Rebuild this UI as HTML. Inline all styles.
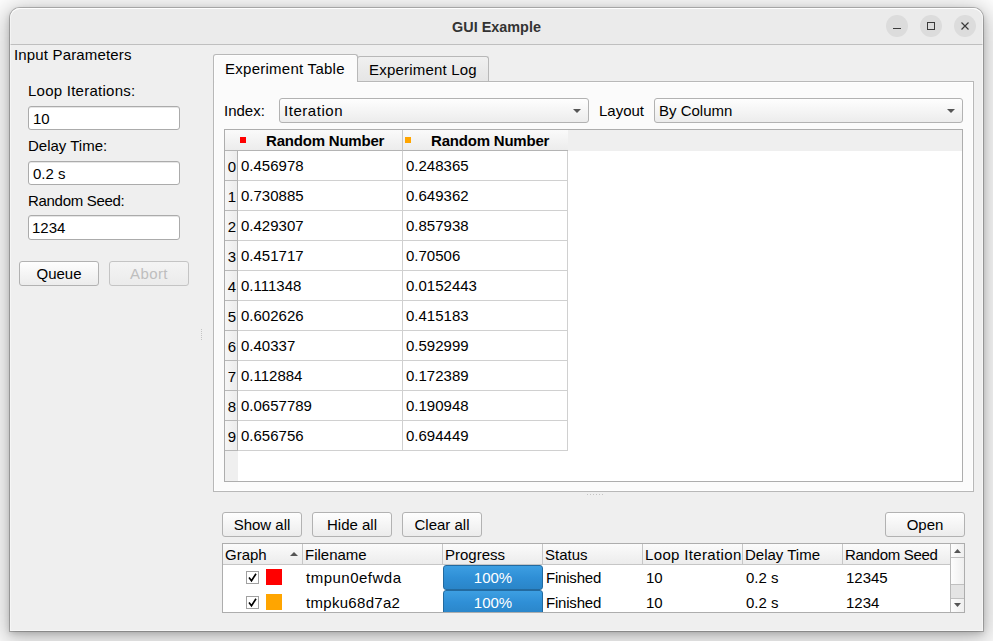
<!DOCTYPE html>
<html><head><meta charset="utf-8"><title>GUI Example</title>
<style>
html,body{margin:0;padding:0;}
body{width:993px;height:641px;overflow:hidden;background:#fff;position:relative;font-family:"Liberation Sans",sans-serif;font-size:15px;color:#000;}
*{box-sizing:border-box;}
.abs{position:absolute;}
svg{display:block;}
#win{position:absolute;left:10px;top:8px;width:973px;height:623px;background:#efefef;border-radius:10px 10px 0 0;
 box-shadow:0 0 0 1px rgba(0,0,0,.22),0 2px 6px rgba(0,0,0,.2),0 5px 24px 6px rgba(0,0,0,.25);}
#win:after{content:"";position:absolute;left:0;top:0;right:0;bottom:0;border-radius:10px 10px 0 0;box-shadow:inset 0 0 0 1px rgba(255,255,255,.45),inset 0 1px 0 rgba(255,255,255,.9);pointer-events:none;}
#title{position:absolute;left:0;top:0;width:973px;height:37px;background:#ebebeb;border-radius:10px 10px 0 0;border-bottom:1px solid #bfbfbf;}
#title .t{position:absolute;left:0;width:100%;top:11px;line-height:17px;text-align:center;font-weight:bold;font-size:14.4px;color:#333;}
.wb{position:absolute;top:7px;width:22px;height:22px;border-radius:11px;background:#dcdcdc;}
.lbl{position:absolute;white-space:nowrap;line-height:18px;height:18px;}
.edit{position:absolute;width:152px;height:24px;background:#fff;border:1px solid #ababab;border-radius:3px;box-shadow:inset 0 1px 0 #e6e6e6;}
.edit span{position:absolute;left:4px;top:3px;line-height:18px;}
.btn{position:absolute;height:25px;border:1px solid #b2b2b2;border-radius:3px;background:linear-gradient(#fefefe,#ececec);text-align:center;line-height:23px;white-space:nowrap;}
.btn.dis{color:#bebebe;border-color:#c4c4c4;background:linear-gradient(#f4f4f4,#ebebeb);}
.combo{position:absolute;height:25px;border:1px solid #b2b2b2;border-radius:3px;background:linear-gradient(#fefefe,#ececec);}
.combo span{position:absolute;left:4px;top:3px;line-height:18px;white-space:nowrap;}
.combo i{position:absolute;right:7px;top:10px;width:0;height:0;border-left:4px solid transparent;border-right:4px solid transparent;border-top:4px solid #555;}
#pane{position:absolute;left:213px;top:81px;width:761px;height:411px;background:#fbfbfb;border:1px solid #b8b8b8;box-shadow:inset 0 0 0 1px rgba(255,255,255,.8);}
.tab{position:absolute;border:1px solid #b8b8b8;border-bottom:none;border-radius:3px 3px 0 0;white-space:nowrap;}
#tbl{position:absolute;left:224px;top:129px;width:739px;height:353px;background:#fff;border:1px solid #adadad;}
.hdr{position:absolute;background:linear-gradient(#fafafa,#ececec);border-right:1px solid #c6c6c6;border-bottom:1px solid #b4b4b4;}
.cell{position:absolute;height:30px;border-right:1px solid #d0d0d0;border-bottom:1px solid #d0d0d0;background:#fff;}
.cell span{position:absolute;left:3px;top:6px;line-height:18px;}
.rh{position:absolute;left:0;width:13px;height:30px;background:linear-gradient(90deg,#f6f6f6,#ececec);border-right:1px solid #b2b2b2;border-bottom:1px solid #b8b8b8;}
.rh span{position:absolute;left:1px;width:12px;text-align:center;top:7px;line-height:18px;}
#tree{position:absolute;left:222px;top:543px;width:743px;height:70px;background:#fff;border:1px solid #adadad;overflow:hidden;}
.th{position:absolute;top:0;height:21px;background:linear-gradient(#fbfbfb,#ececec);border-right:1px solid #c6c6c6;border-bottom:1px solid #c6c6c6;}
.th span{position:absolute;left:2px;top:2px;line-height:18px;white-space:nowrap;}
.tc{position:absolute;line-height:18px;white-space:nowrap;}
.cb{position:absolute;width:13px;height:13px;border:1px solid #a0a0a0;background:#fff;}
.sw{position:absolute;width:16px;height:16px;}
.pb{position:absolute;width:100px;height:25px;border:1px solid #236a9f;border-radius:3px;background:linear-gradient(#3d9fe2,#2f8fd6 50%,#2a85c8);color:#fff;text-align:center;line-height:23px;}
</style></head><body>
<div id="win">
 <div id="title"><div class="t">GUI Example</div>
  <div class="wb" style="left:876px"><svg width="22" height="22"><path d="M7 13.5h8" stroke="#3a3a3a" stroke-width="1" fill="none"/></svg></div>
  <div class="wb" style="left:910px"><svg width="22" height="22"><rect x="7.5" y="7.5" width="7" height="7" stroke="#3a3a3a" stroke-width="1" fill="none"/></svg></div>
  <div class="wb" style="left:944px"><svg width="22" height="22"><path d="M7.5 7.5l7 7M14.5 7.5l-7 7" stroke="#3a3a3a" stroke-width="1.2" fill="none"/></svg></div>
 </div>
</div>

<div class="lbl" style="left:14px;top:46px;letter-spacing:.16px">Input Parameters</div>
<div class="lbl" style="left:28px;top:82px;letter-spacing:.25px">Loop Iterations:</div>
<div class="edit" style="left:28px;top:106px"><span>10</span></div>
<div class="lbl" style="left:28px;top:137px">Delay Time:</div>
<div class="edit" style="left:28px;top:161px"><span>0.2 s</span></div>
<div class="lbl" style="left:28px;top:192px;letter-spacing:-.3px">Random Seed:</div>
<div class="edit" style="left:28px;top:215px;height:25px"><span style="left:3px">1234</span></div>
<div class="btn" style="left:19px;top:261px;width:80px">Queue</div>
<div class="btn dis" style="left:109px;top:261px;width:80px;letter-spacing:.4px">Abort</div>

<svg class="abs" style="left:200px;top:328px" width="4" height="14"><g fill="#c4c4c4"><rect x="1" y="1" width="1" height="1"/><rect x="1" y="3" width="1" height="1"/><rect x="1" y="5" width="1" height="1"/><rect x="1" y="7" width="1" height="1"/><rect x="1" y="9" width="1" height="1"/><rect x="1" y="11" width="1" height="1"/></g></svg>
<svg class="abs" style="left:586px;top:493px" width="20" height="3"><g fill="#c4c4c4"><rect x="1" y="1" width="1" height="1"/><rect x="4" y="1" width="1" height="1"/><rect x="7" y="1" width="1" height="1"/><rect x="10" y="1" width="1" height="1"/><rect x="13" y="1" width="1" height="1"/><rect x="16" y="1" width="1" height="1"/></g></svg>

<div id="pane"></div>
<div class="tab" style="left:357px;top:56px;width:132px;height:25px;background:linear-gradient(#f0f0f0,#e5e5e5);"><span class="lbl" style="left:11px;top:4px;letter-spacing:.2px">Experiment Log</span></div>
<div class="tab" style="left:213px;top:54px;width:145px;height:28px;background:#fbfbfb;box-shadow:inset 1px 1px 0 rgba(255,255,255,.8)"><span class="lbl" style="left:11px;top:5px;letter-spacing:.26px">Experiment Table</span></div>

<div class="abs" style="left:214px;top:81px;width:143px;height:2px;background:#fbfbfb"></div>
<div class="lbl" style="left:224px;top:102px">Index:</div>
<div class="combo" style="left:279px;top:98px;width:310px"><span style="letter-spacing:.55px">Iteration</span><i></i></div>
<div class="lbl" style="left:599px;top:102px">Layout</div>
<div class="combo" style="left:654px;top:98px;width:309px"><span>By Column</span><i></i></div>

<div id="tbl">
 <div class="abs" style="left:0;top:0;width:737px;height:21px;background:#efefef"></div>
 <div class="abs" style="left:0;top:21px;width:13px;height:330px;background:#efefef"></div>
 <div class="hdr" style="left:0;top:0;width:13px;height:21px;border-right:none"></div>
 <div class="hdr" style="left:13px;top:0;width:165px;height:21px"><i class="abs" style="left:2px;top:7px;width:6px;height:6px;background:#ff0000"></i><b class="lbl" style="left:28px;top:2px;letter-spacing:-.2px">Random Number</b></div>
 <div class="hdr" style="left:178px;top:0;width:165px;height:21px;border-right:none"><i class="abs" style="left:2px;top:7px;width:6px;height:6px;background:#ffa500"></i><b class="lbl" style="left:28px;top:2px;letter-spacing:-.2px">Random Number</b></div>
 <div class="rh" style="top:21px"><span>0</span></div><div class="cell" style="left:13px;top:21px;width:165px"><span>0.456978</span></div><div class="cell" style="left:178px;top:21px;width:165px"><span>0.248365</span></div>
 <div class="rh" style="top:51px"><span>1</span></div><div class="cell" style="left:13px;top:51px;width:165px"><span>0.730885</span></div><div class="cell" style="left:178px;top:51px;width:165px"><span>0.649362</span></div>
 <div class="rh" style="top:81px"><span>2</span></div><div class="cell" style="left:13px;top:81px;width:165px"><span>0.429307</span></div><div class="cell" style="left:178px;top:81px;width:165px"><span>0.857938</span></div>
 <div class="rh" style="top:111px"><span>3</span></div><div class="cell" style="left:13px;top:111px;width:165px"><span>0.451717</span></div><div class="cell" style="left:178px;top:111px;width:165px"><span>0.70506</span></div>
 <div class="rh" style="top:141px"><span>4</span></div><div class="cell" style="left:13px;top:141px;width:165px"><span>0.111348</span></div><div class="cell" style="left:178px;top:141px;width:165px"><span>0.0152443</span></div>
 <div class="rh" style="top:171px"><span>5</span></div><div class="cell" style="left:13px;top:171px;width:165px"><span>0.602626</span></div><div class="cell" style="left:178px;top:171px;width:165px"><span>0.415183</span></div>
 <div class="rh" style="top:201px"><span>6</span></div><div class="cell" style="left:13px;top:201px;width:165px"><span>0.40337</span></div><div class="cell" style="left:178px;top:201px;width:165px"><span>0.592999</span></div>
 <div class="rh" style="top:231px"><span>7</span></div><div class="cell" style="left:13px;top:231px;width:165px"><span>0.112884</span></div><div class="cell" style="left:178px;top:231px;width:165px"><span>0.172389</span></div>
 <div class="rh" style="top:261px"><span>8</span></div><div class="cell" style="left:13px;top:261px;width:165px"><span>0.0657789</span></div><div class="cell" style="left:178px;top:261px;width:165px"><span>0.190948</span></div>
 <div class="rh" style="top:291px"><span>9</span></div><div class="cell" style="left:13px;top:291px;width:165px"><span>0.656756</span></div><div class="cell" style="left:178px;top:291px;width:165px"><span>0.694449</span></div>
</div>

<div class="btn" style="left:222px;top:512px;width:80px">Show all</div>
<div class="btn" style="left:312px;top:512px;width:80px">Hide all</div>
<div class="btn" style="left:402px;top:512px;width:80px">Clear all</div>
<div class="btn" style="left:885px;top:512px;width:80px">Open</div>

<div id="tree">
 <div class="th" style="left:0;width:80px"><span>Graph</span><svg class="abs" style="left:67px;top:8px" width="8" height="4"><path d="M0 4L4 0L8 4z" fill="#555"/></svg></div>
 <div class="th" style="left:80px;width:140px"><span>Filename</span></div>
 <div class="th" style="left:220px;width:100px"><span>Progress</span></div>
 <div class="th" style="left:320px;width:100px"><span>Status</span></div>
 <div class="th" style="left:420px;width:100px;overflow:hidden"><span style="letter-spacing:.35px">Loop Iteration</span></div>
 <div class="th" style="left:520px;width:100px"><span>Delay Time</span></div>
 <div class="th" style="left:620px;width:108px"><span style="letter-spacing:-.3px">Random Seed</span></div>

 <div class="cb" style="left:23px;top:27px"><svg class="abs" style="left:0;top:0" width="11" height="11"><path d="M2 5.5L4.5 8.8L9 1.8" stroke="#000" stroke-width="1.6" fill="none"/></svg></div>
 <div class="sw" style="left:43px;top:25px;background:#ff0000"></div>
 <div class="tc" style="left:83px;top:25px;letter-spacing:.5px">tmpun0efwda</div>
 <div class="pb" style="left:220px;top:21px">100%</div>
 <div class="tc" style="left:323px;top:25px;letter-spacing:-.2px">Finished</div>
 <div class="tc" style="left:423px;top:25px">10</div>
 <div class="tc" style="left:523px;top:25px">0.2 s</div>
 <div class="tc" style="left:623px;top:25px">12345</div>

 <div class="cb" style="left:23px;top:52px"><svg class="abs" style="left:0;top:0" width="11" height="11"><path d="M2 5.5L4.5 8.8L9 1.8" stroke="#000" stroke-width="1.6" fill="none"/></svg></div>
 <div class="sw" style="left:43px;top:50px;background:#ffa500"></div>
 <div class="tc" style="left:83px;top:50px;letter-spacing:.3px">tmpku68d7a2</div>
 <div class="pb" style="left:220px;top:46px">100%</div>
 <div class="tc" style="left:323px;top:50px;letter-spacing:-.2px">Finished</div>
 <div class="tc" style="left:423px;top:50px">10</div>
 <div class="tc" style="left:523px;top:50px">0.2 s</div>
 <div class="tc" style="left:623px;top:50px">1234</div>

 <div class="abs" style="left:727px;top:0;width:14px;height:68px;background:#e4e4e4;border-left:1px solid #b9b9b9"></div>
 <div class="abs" style="left:728px;top:0;width:13px;height:14px;background:linear-gradient(90deg,#fdfdfd,#efefef);border-bottom:1px solid #c0c0c0"><svg class="abs" style="left:3px;top:5px" width="7" height="4"><path d="M0 4L3.5 0L7 4z" fill="#555"/></svg></div>
 <div class="abs" style="left:728px;top:14px;width:13px;height:27px;background:linear-gradient(90deg,#fdfdfd,#efefef);border-bottom:1px solid #c0c0c0"></div>
 <div class="abs" style="left:728px;top:54px;width:13px;height:14px;background:linear-gradient(90deg,#fdfdfd,#efefef);border-top:1px solid #c0c0c0"><svg class="abs" style="left:3px;top:4px" width="7" height="4"><path d="M0 0L3.5 4L7 0z" fill="#555"/></svg></div>
</div>
</body></html>
